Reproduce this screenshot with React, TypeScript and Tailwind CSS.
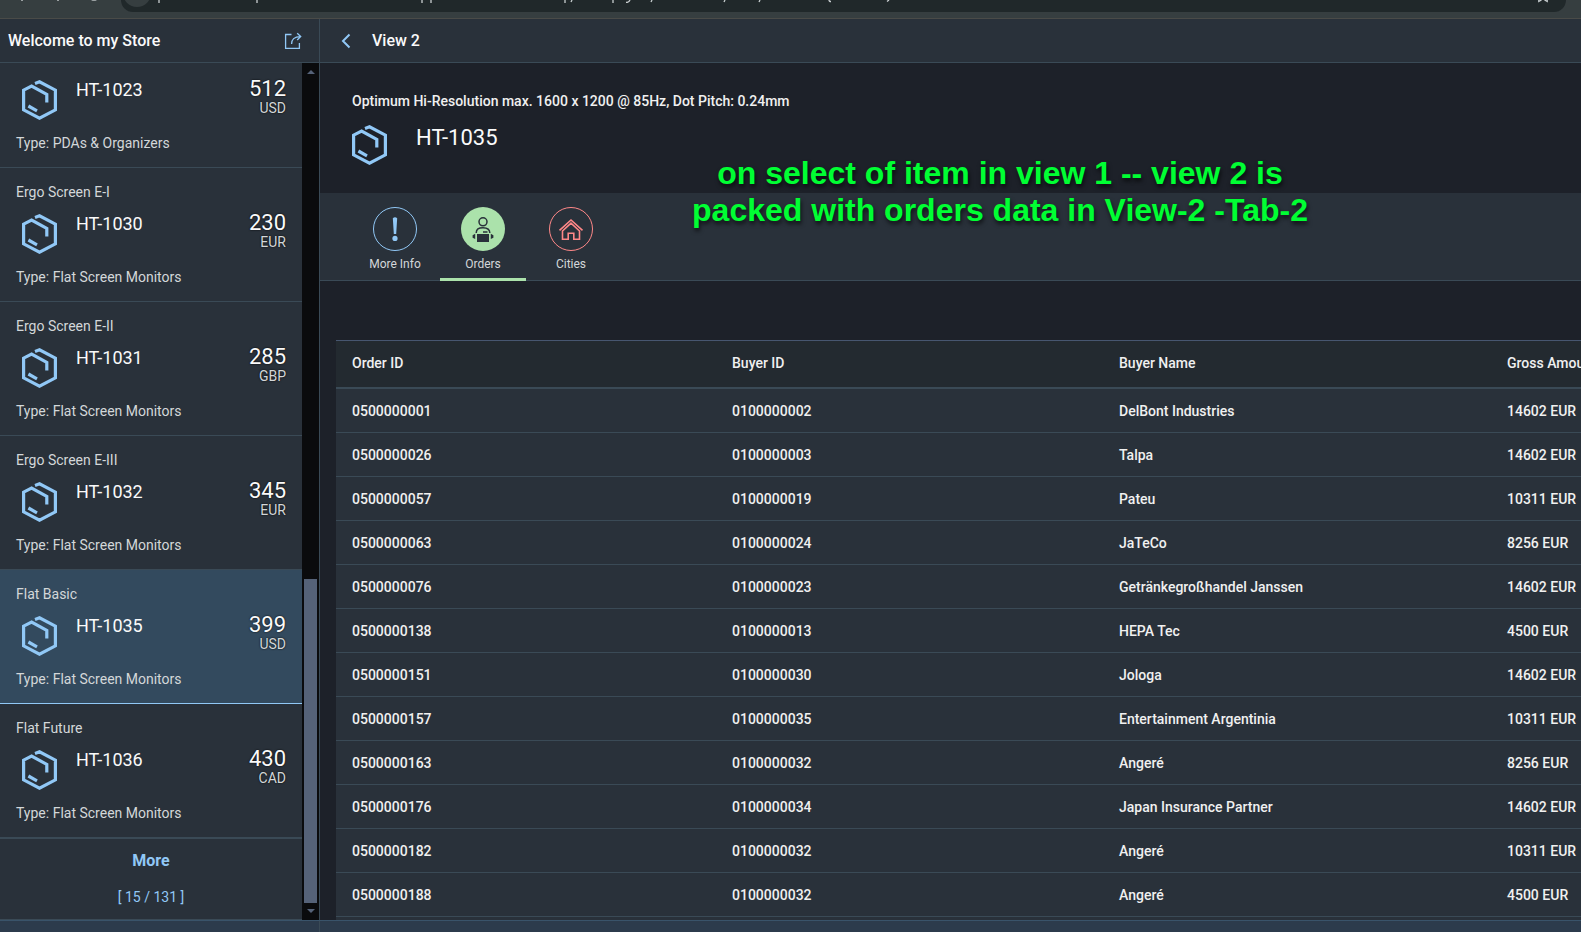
import React from "react";

type Product = { name?: string; id: string; price: string; currency: string; type: string; selected?: boolean };

const products: Product[] = [
  { id: "HT-1023", price: "512", currency: "USD", type: "PDAs & Organizers" },
  { name: "Ergo Screen E-I", id: "HT-1030", price: "230", currency: "EUR", type: "Flat Screen Monitors" },
  { name: "Ergo Screen E-II", id: "HT-1031", price: "285", currency: "GBP", type: "Flat Screen Monitors" },
  { name: "Ergo Screen E-III", id: "HT-1032", price: "345", currency: "EUR", type: "Flat Screen Monitors" },
  { name: "Flat Basic", id: "HT-1035", price: "399", currency: "USD", type: "Flat Screen Monitors", selected: true },
  { name: "Flat Future", id: "HT-1036", price: "430", currency: "CAD", type: "Flat Screen Monitors" },
];

const orders = [
  ["0500000001", "0100000002", "DelBont Industries", "14602 EUR"],
  ["0500000026", "0100000003", "Talpa", "14602 EUR"],
  ["0500000057", "0100000019", "Pateu", "10311 EUR"],
  ["0500000063", "0100000024", "JaTeCo", "8256 EUR"],
  ["0500000076", "0100000023", "Getränkegroßhandel Janssen", "14602 EUR"],
  ["0500000138", "0100000013", "HEPA Tec", "4500 EUR"],
  ["0500000151", "0100000030", "Jologa", "14602 EUR"],
  ["0500000157", "0100000035", "Entertainment Argentinia", "10311 EUR"],
  ["0500000163", "0100000032", "Angeré", "8256 EUR"],
  ["0500000176", "0100000034", "Japan Insurance Partner", "14602 EUR"],
  ["0500000182", "0100000032", "Angeré", "10311 EUR"],
  ["0500000188", "0100000032", "Angeré", "4500 EUR"],
];

function ProductIcon() {
  return (
    <svg viewBox="0 0 35 40" className="h-10 w-[35px] shrink-0 text-[#91c8f6]" fill="none" stroke="currentColor" strokeWidth="3.2" aria-hidden="true">
      <path d="M13 3.4 17.5 1.8 33.4 10.2V29.8L17.5 38.2 1.6 29.8V10.2L9.6 6 24.8 14.4V22.6" />
      <path d="M6.4 26 15 30.8" />
    </svg>
  );
}

function BrowserBar() {
  return (
    <div className="flex h-[19px] shrink-0 items-start border-b border-[#4a4b48] bg-[#363e40] pr-[15px]">
      <svg viewBox="0 0 121 3" className="h-[3px] w-[121px] shrink-0 fill-[#9aa0a2]" aria-hidden="true">
        <path d="M21 0H23V1H21ZM57 0H59V1H57ZM91 0H97L95.5 1H92.5Z" />
      </svg>
      <div className="flex h-3 min-w-0 flex-1 items-start overflow-hidden rounded-b-2xl bg-[#20282a] pr-[18px]">
        <div className="-mt-[21px] ml-0.5 h-7 w-7 shrink-0 rounded-full bg-[#363e40]" />
        <svg viewBox="0 0 800 3" className="h-[3px] w-[800px] shrink-0" fill="none" stroke="#c9cfd1" strokeWidth="1.3" aria-hidden="true">
          <path d="M8 0V3M106 0V3M271 0V3M280 0V3M414 0V3M420 2 421 0M462 0V3M475 2.5Q478 2.5 479 0M500 2 501 0M573 2 574 0M608 2 609 0M678 0Q678 1.5 680 1.5M736 1.5 738 0" />
        </svg>
        <svg viewBox="0 0 10 3" className="ml-auto h-[3px] w-[10px] shrink-0" fill="none" stroke="#c9cfd1" strokeWidth="1.3" aria-hidden="true">
          <path d="M.8 0V1.5L3.5 0M9.2 0V1.5L6.5 0" />
        </svg>
      </div>
    </div>
  );
}

function ProductRow({ p }: { p: Product }) {
  return (
    <li className={p.selected ? "h-[134px] shrink-0 border-b border-[#91c8f6] bg-[#334a5e]" : "h-[134px] shrink-0 border-b border-[#3a4a56]"}>
      <a href="#" className="flex flex-col px-4 pt-4">
        <span className="h-4 text-sm leading-4 text-[#d3d7d9]">{p.name}</span>
        <span className="mt-3 flex h-12">
          <span className="w-[60px] pt-0.5 pl-[6px]"><ProductIcon /></span>
          <span className="flex-1 text-lg leading-6 text-[#fafafa]">{p.id}</span>
          <span className="flex flex-col items-end">
            <span className="text-[22px] leading-[22px] text-[#fafafa] [text-shadow:0_0_2px_#000]">{p.price}</span>
            <span className="text-sm leading-4 text-[#d3d7d9] [text-shadow:0_0_2px_#000]">{p.currency}</span>
          </span>
        </span>
        <span className="mt-2 text-sm leading-[18px] text-[#d3d7d9]">Type: {p.type}</span>
      </a>
    </li>
  );
}

function Sidebar() {
  return (
    <aside className="flex w-80 shrink-0 flex-col border-r border-[#3a4a56] bg-[#29313a]">
      <header className="flex h-11 shrink-0 items-center justify-between border-b border-[#3a4a56] pr-4 pl-2">
        <h1 className="text-base font-medium text-[#fafafa]">Welcome to my Store</h1>
        <button aria-label="Share" className="text-[#91c8f6]">
          <svg viewBox="0 0 20 18" className="h-[18px] w-5" fill="none" stroke="currentColor" strokeWidth="1.3" aria-hidden="true">
            <path d="M8.5 2.5H2.6V16.3H16.4V11" />
            <path d="M8.6 12C8.6 7.5 11 4.6 17.5 4.6M14.2 1.2 17.7 4.6 14.2 8" />
          </svg>
        </button>
      </header>
      <div className="flex min-h-0 flex-1">
        <div className="flex min-w-0 flex-1 flex-col justify-end overflow-hidden">
          <ul className="flex flex-col">
            {products.map((p) => <ProductRow key={p.id} p={p} />)}
          </ul>
          <button className="flex h-[82px] shrink-0 flex-col items-center border-y border-[#3a4a56] pt-3 text-[#91c8f6]">
            <span className="text-base leading-5 font-bold">More</span>
            <span className="mt-4 text-sm leading-5">[ 15 / 131 ]</span>
          </button>
        </div>
        <div className="flex w-[17px] shrink-0 flex-col items-center justify-between bg-[#0a0b0d] py-[7px]">
          <svg viewBox="0 0 8 4" className="h-1 w-2 shrink-0 fill-[#556278]" aria-hidden="true"><path d="M4 0 8 4H0Z" /></svg>
          <span className="mt-auto mb-[6px] h-[324px] w-[13px] bg-[#556278]" />
          <svg viewBox="0 0 8 4" className="h-1 w-2 shrink-0 fill-[#556278]" aria-hidden="true"><path d="M4 4 8 0H0Z" /></svg>
        </div>
      </div>
    </aside>
  );
}

function Tabs() {
  return (
    <div role="tablist" className="flex h-[88px] shrink-0 border-b border-[#3a4a56] bg-[#29313a] pl-8 text-xs text-[#d3d7d9]">
      <button role="tab" aria-selected="false" className="mr-0.5 flex w-[86px] flex-col items-center pt-[14px]">
        <span className="flex size-11 items-center justify-center rounded-full border border-[#91c8f6] text-[#91c8f6]">
          <svg viewBox="0 0 24 24" className="size-6" fill="currentColor" aria-hidden="true">
            <path d="M9.8 1.2Q12 -.6 14.2 1.2L13.2 17H10.8Z" /><circle cx="12" cy="21.4" r="2.6" />
          </svg>
        </span>
        <span className="mt-1 leading-[18px]">More Info</span>
      </button>
      <button role="tab" aria-selected="true" className="mr-0.5 flex h-[88px] w-[86px] flex-col items-center border-b-[3px] border-[#abe2ab] pt-[14px]">
        <span className="flex size-11 shrink-0 items-center justify-center rounded-full bg-[#abe2ab] text-[#29313a]">
          <svg viewBox="0 0 22 26" className="h-[26px] w-[22px]" fill="none" stroke="currentColor" strokeWidth="1.5" aria-hidden="true">
            <circle cx="11" cy="5.8" r="4" />
            <path d="M4.2 17C4.2 13.2 6.5 11.7 11 11.7S17.8 13.2 17.8 17M11 16H15.5" />
            <path d="M5 18H17V26H5ZM.6 19.2 3.2 17.8V23L.6 21.8ZM21.4 19.2 18.8 17.8V23L21.4 21.8Z" fill="currentColor" stroke="none" />
          </svg>
        </span>
        <span className="mt-1 leading-[18px]">Orders</span>
      </button>
      <button role="tab" aria-selected="false" className="flex w-[86px] flex-col items-center pt-[14px]">
        <span className="flex size-11 items-center justify-center rounded-full border border-[#ff8888] text-[#ff8888]">
          <svg viewBox="0 0 26 22" className="h-[22px] w-[26px]" fill="none" stroke="currentColor" strokeWidth="1.6" aria-hidden="true">
            <path d="M1.5 12.3 13 2 24.5 12.3" />
            <path d="M4.5 13 13 5.2 21.5 13V21.2H15.8V15.2H10.2V21.2H4.5V12.5" />
          </svg>
        </span>
        <span className="mt-1 leading-[18px]">Cities</span>
      </button>
    </div>
  );
}

function Detail() {
  return (
    <main className="relative flex min-w-0 flex-1 flex-col overflow-hidden bg-[#1d2129]">
      <header className="flex h-11 shrink-0 items-center border-b border-[#3a4a56] bg-[#29313a] pl-5">
        <button aria-label="Back" className="text-[#91c8f6]">
          <svg viewBox="0 0 12 16" className="h-4 w-3" fill="none" stroke="currentColor" strokeWidth="2" aria-hidden="true"><path d="M9.5 1.5 3 8 9.5 14.5" /></svg>
        </button>
        <h2 className="ml-5 text-base font-medium text-[#fafafa]">View 2</h2>
      </header>
      <section className="h-[130px] shrink-0 px-8 pt-7">
        <p className="text-sm leading-5 font-medium text-[#f0f0f0]">Optimum Hi-Resolution max. 1600 x 1200 @ 85Hz, Dot Pitch: 0.24mm</p>
        <div className="mt-3 flex">
          <span className="w-16 pt-0.5"><ProductIcon /></span>
          <h3 className="text-[22px] leading-[30px] text-[#fafafa]">HT-1035</h3>
        </div>
      </section>
      <Tabs />
      <div className="mt-[59px] min-h-0 flex-1 overflow-hidden pl-4">
        <table className="w-[1553px] table-fixed border-separate border-spacing-0 text-left text-sm text-[#f0f0f0]">
          <colgroup>
            <col className="w-[380px]" /><col className="w-[387px]" /><col className="w-[388px]" /><col />
          </colgroup>
          <thead>
            <tr className="bg-[#232a30]">
              {["Order ID", "Buyer ID", "Buyer Name", "Gross Amount"].map((h) => (
                <th key={h} className="h-[49px] border-t border-b-2 border-t-[#475670] border-b-[#3a4a56] px-4 pt-0 pb-0.5 font-medium">{h}</th>
              ))}
            </tr>
          </thead>
          <tbody>
            {orders.map((row) => (
              <tr key={row[0]} className="bg-[#29313a]">
                {row.map((cell, i) => <td key={i} className="h-11 border-b border-[#3a4a56] px-4 py-0 font-medium">{cell}</td>)}
              </tr>
            ))}
            <tr className="bg-[#29313a]"><td colSpan={4} className="h-11" /></tr>
          </tbody>
        </table>
      </div>
      <p className="absolute top-[136px] left-[360px] w-[640px] text-center font-['Liberation_Sans',Arial,sans-serif] text-[32px] leading-[37px] font-bold text-[#00ff33] [text-shadow:1px_3px_4px_#000a]">
        on select of item in view 1 -- view 2 is<br />packed with orders data in View-2 -Tab-2
      </p>
    </main>
  );
}

export default function App() {
  return (
    <div className="flex h-screen flex-col overflow-hidden bg-[#1d2129] font-[Roboto,sans-serif]">
      <BrowserBar />
      <div className="flex min-h-0 flex-1">
        <Sidebar />
        <Detail />
      </div>
      <footer className="flex h-3 shrink-0 border-t border-[#39536a] bg-[#2c3b4c]">
        <div className="w-80 border-r border-[#3a4a56]" />
      </footer>
    </div>
  );
}
